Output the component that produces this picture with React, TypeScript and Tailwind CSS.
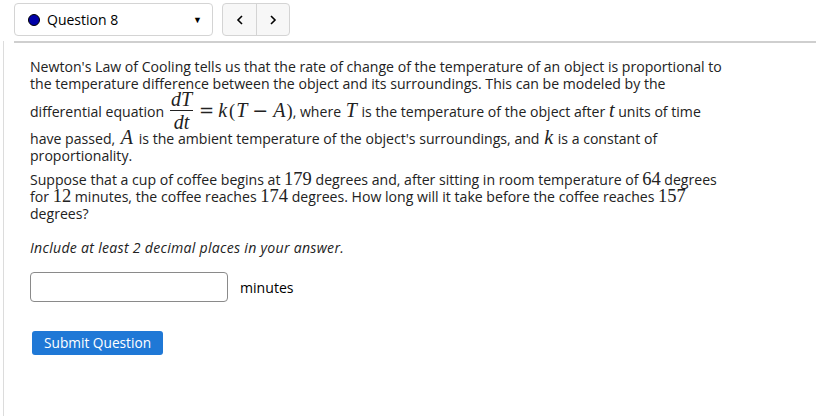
import React from "react";

const M = ({ children, cls = "" }: { children: React.ReactNode; cls?: string }) => (
  <span className={"[font-family:'Liberation_Serif',serif] text-[20px] leading-[15px] italic " + cls}>{children}</span>
);
const N = ({ children, cls = "" }: { children: React.ReactNode; cls?: string }) => (
  <span className={"[font-family:'Liberation_Serif',serif] text-[18.5px] leading-[15px] " + cls}>{children}</span>
);
const Op = ({ children, cls = "" }: { children: React.ReactNode; cls?: string }) => (
  <span className={"[font-family:'DejaVu_Serif',serif] leading-[15px] " + cls}>{children}</span>
);

export default function App() {
  return (
    <div className="w-[816px] h-[416px] bg-white overflow-hidden relative text-[#222]">
      <div className="flex items-start gap-[9px] pl-[14px] pt-[3px] h-[41px]">
        <div className="w-[199px] h-[33px] border border-[#d4d4d4] rounded-[4px] flex items-center pl-[13px] pr-[8px]">
          <span className="w-[12px] h-[12px] rounded-full bg-[#0000a8] border border-black mr-[7px]" />
          <span className="[font-family:'Open_Sans',sans-serif] text-[14px] text-black">Question 8</span>
          <span className="ml-auto text-[9px] text-black mr-[2px]">▼</span>
        </div>
        <div className="w-[68px] h-[33px] border border-[#d4d4d4] rounded-[4px] bg-[#f7f7f7] flex">
          <div className="w-[34px] flex items-center justify-center border-r border-[#d4d4d4]">
            <svg width="8" height="10" viewBox="0 0 8 10"><path d="M6 1 L2 5 L6 9" stroke="#000" strokeWidth="1.6" fill="none" /></svg>
          </div>
          <div className="flex-1 flex items-center justify-center">
            <svg width="8" height="10" viewBox="0 0 8 10"><path d="M2 1 L6 5 L2 9" stroke="#000" strokeWidth="1.6" fill="none" /></svg>
          </div>
        </div>
      </div>
      <div className="flex">
        <div className="w-[3px]" />
        <div className="w-[1px] bg-[#dcdcdc] h-[375px]" />
        <div className="flex-1 ml-[10px]">
          <div className="h-[2px] bg-[#cfcfcf]" />
          <div className="pl-[16px] pt-[15px] [font-family:'Open_Sans',sans-serif] text-[14.1px] leading-[17px] text-[#222]">
            <p className="w-[698px]">
              Newton's Law of Cooling tells us that the rate of change of the temperature of an object is proportional to the temperature difference between the object and its surroundings. This can be modeled by the differential equation{" "}
              <span className="inline-flex flex-col items-center align-[11px] ml-[2px] mr-[5px] -mt-[1px] -mb-[1px] [font-family:'Liberation_Serif',serif] italic text-[20px] leading-[17px]">
                <span className="px-[1px] pb-[2px] border-b border-[#222]">dT</span>
                <span className="pt-[3px]">dt</span>
              </span>
              <Op cls="text-[18px] ml-[1px] mr-[4px]">=</Op>
              <M cls="mr-[2px]">k</M>
              <N>(</N>
              <M cls="ml-[1px] mr-[5px]">T</M>
              <Op cls="text-[19px] mr-[5px]">−</Op>
              <M cls="mr-[1px]">A</M>
              <N>)</N>, where <M cls="mx-[1px]">T</M> is the temperature of the object after <M>t</M> units of time have passed, <M cls="mx-[2px]">A</M> is the ambient temperature of the object's surroundings, and <M cls="mx-[1px]">k</M> is a constant of proportionality.
            </p>
            <p className="mt-[7px] w-[698px]">
              Suppose that a cup of coffee begins at <N>179</N> degrees and, after sitting in room temperature of <N>64</N> degrees for <N>12</N> minutes, the coffee reaches <N>174</N> degrees. How long will it take before the coffee reaches <N>157</N> degrees?
            </p>
            <p className="mt-[17px] italic tracking-[0.28px]">Include at least 2 decimal places in your answer.</p>
            <div className="flex items-center mt-[16px]">
              <div className="w-[198px] h-[30px] border border-[#8a8a8a] rounded-[4px]" />
              <span className="ml-[12px] text-black">minutes</span>
            </div>
            <button className="mt-[29px] ml-[2px] h-[24px] px-[12px] bg-[#1f78d6] rounded-[3px] text-white [font-family:'Open_Sans',sans-serif] text-[13.7px] leading-[24px]">
              Submit Question
            </button>
          </div>
        </div>
      </div>
    </div>
  );
}
